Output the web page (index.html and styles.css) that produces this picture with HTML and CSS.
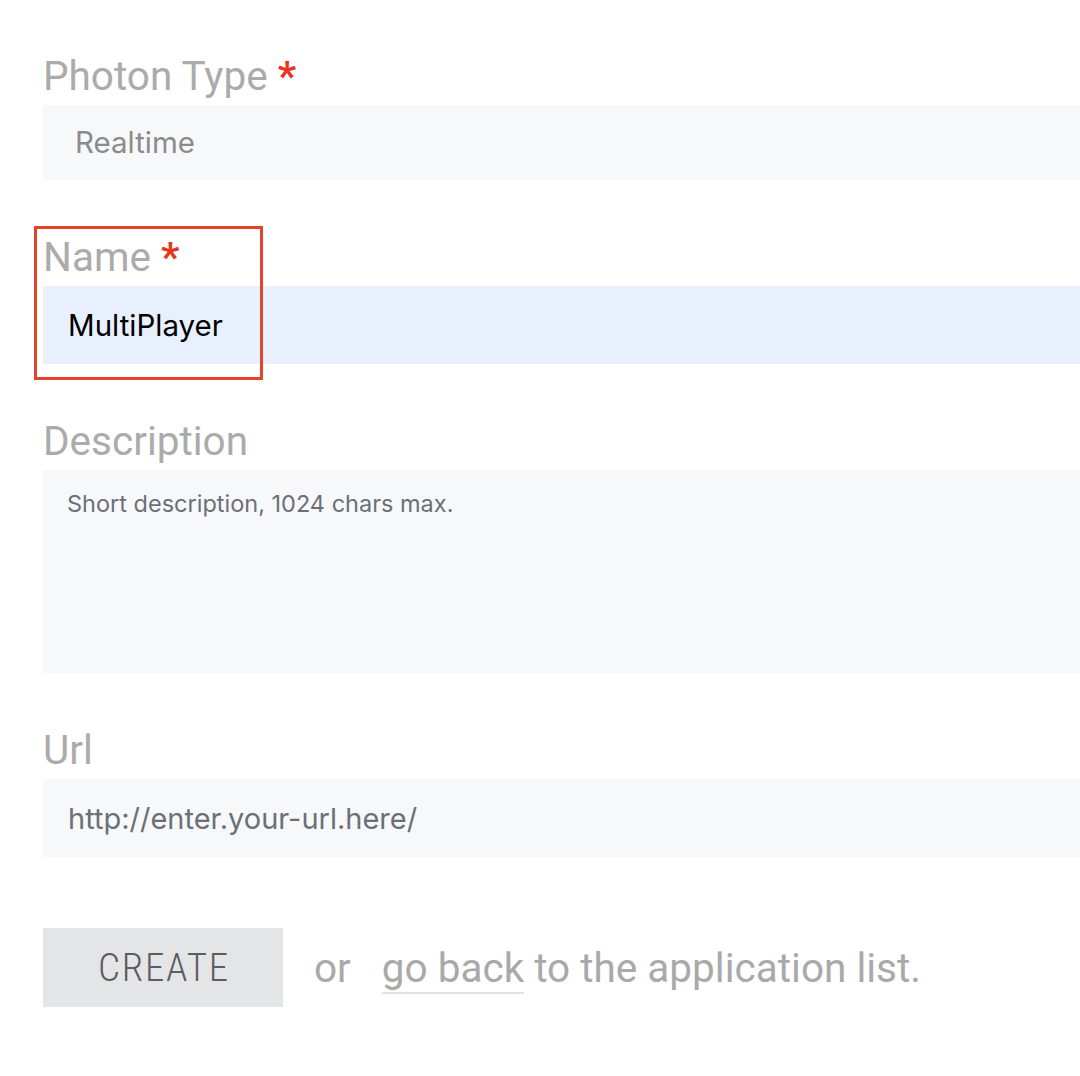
FILE: index.html
```html
<!DOCTYPE html>
<html>
<head>
<meta charset="utf-8">
<link rel="stylesheet" href="styles.css">
</head>
<body>
<form class="form">
  <div class="group">
    <label class="label">Photon Type <span class="req">*</span></label>
    <div class="field select">Realtime</div>
  </div>
  <div class="group annotated">
    <label class="label">Name <span class="req">*</span></label>
    <div class="field input filled">MultiPlayer</div>
    <div class="highlight"></div>
  </div>
  <div class="group">
    <label class="label">Description</label>
    <div class="field textarea">Short description, 1024 chars max.</div>
  </div>
  <div class="group last">
    <label class="label">Url</label>
    <div class="field input placeholder">http://enter.your-url.here/</div>
  </div>
  <div class="actions">
    <button type="button" class="btn">CREATE</button>
    <span class="or">or</span>
    <span class="rest"><a class="back" href="#">go back</a> to the application list.</span>
  </div>
</form>
</body>
</html>
```

FILE: styles.css
```css
html, body {
  margin: 0;
  padding: 0;
  background: #ffffff;
  overflow: hidden;
}
body {
  font-family: Roboto, "Noto Sans", sans-serif;
}
.form {
  padding: 53px 0 0 43px;
  width: 1200px;
}
.group {
  margin-bottom: 54px;
}
.group.last {
  margin-bottom: 71px;
}
.annotated {
  position: relative;
}
.label {
  display: block;
  font-size: 40.5px;
  line-height: 46px;
  color: #ababab;
  margin-bottom: 6px;
}
.req {
  color: #e8351f;
  font-weight: 700;
}
.field {
  background: #f7f8fa;
  box-sizing: border-box;
  display: flex;
  align-items: center;
  font-family: Inter, Roboto, sans-serif;
  font-size: 29.5px;
}
.select {
  height: 75px;
  padding: 0 0 2px 32px;
  color: #8a8b8d;
}
.input {
  height: 78px;
  padding-left: 25px;
}
.filled {
  background: #e8f0fe;
  color: #000000;
}
.placeholder {
  color: #6b7078;
  font-size: 29px;
}
.textarea {
  height: 203px;
  align-items: flex-start;
  padding: 19px 0 0 24px;
  font-size: 23.5px;
  color: #6b7078;
}
.highlight {
  position: absolute;
  left: -9px;
  top: -8px;
  width: 229px;
  height: 154px;
  box-sizing: border-box;
  border: 3px solid #e4432b;
}
.actions {
  display: flex;
  align-items: center;
}
.btn {
  width: 240px;
  height: 79px;
  border: 0;
  background: #e4e5e7;
  color: #5c5d5f;
  font-family: "Roboto Condensed", Roboto, sans-serif;
  font-size: 39px;
  font-weight: 300;
  letter-spacing: 1.7px;
  padding: 0 0 0 2px;
  margin: 0 31px 0 0;
}
.or, .rest {
  font-size: 40.5px;
  color: #a9a9a9;
}
.or {
  margin-right: 31px;
}
.back {
  color: #a9a9a9;
  text-decoration: none;
  border-bottom: 2px solid #e2e2e2;
}
```
